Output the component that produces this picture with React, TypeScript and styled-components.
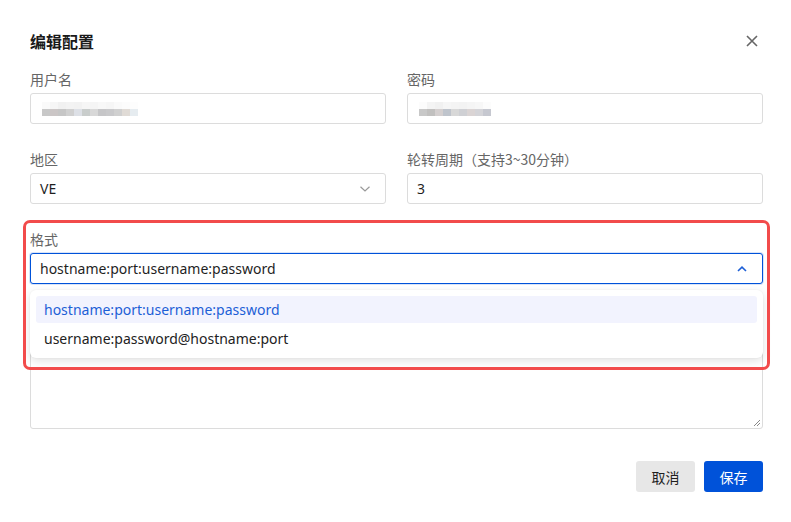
import React from "react";
import styled, {createGlobalStyle} from "styled-components";

const GlobalStyle = createGlobalStyle`
    html, body {
        margin: 0;
        padding: 0;
        background: #ffffff;
    }
    body {
        font-family: "Noto Sans", "Noto Sans CJK SC", sans-serif;
        color: #1f1f1f;
    }
`;

const Dialog = styled.div`
    width: 791px;
    height: 522px;
    box-sizing: border-box;
    padding: 28px 28px 0 30px;
    display: flex;
    flex-direction: column;
`;

const Header = styled.div`
    display: flex;
    align-items: center;
    justify-content: space-between;
    height: 26px;
    margin-bottom: 15px;
`;

const Title = styled.h2`
    margin: 0;
    font-size: 16px;
    font-weight: 700;
    font-family: "Noto Sans CJK SC", sans-serif;
    color: #1a1a1a;
`;

const CloseButton = styled.button`
    border: none;
    background: none;
    padding: 0;
    margin-right: 3px;
    width: 16px;
    height: 16px;
    display: flex;
    align-items: center;
    justify-content: center;
    cursor: pointer;
`;

const Grid = styled.div`
    display: grid;
    grid-template-columns: 1fr 1fr;
    column-gap: 21px;
    row-gap: 25px;
    width: 733px;
`;

const Field = styled.div<{ $wide?: boolean }>`
    position: relative;
    display: flex;
    flex-direction: column;
    gap: 4px;
    grid-column: ${p => (p.$wide ? "1 / span 2" : "auto")};
`;

const Label = styled.label`
    font-size: 14px;
    line-height: 20px;
    color: #666666;
    font-family: "Noto Sans CJK SC", sans-serif;
`;

const Box = styled.div<{ $focused?: boolean }>`
    height: 31px;
    box-sizing: border-box;
    border: 1px solid ${p => (p.$focused ? "#0052d9" : "#dcdcdc")};
    box-shadow: ${p => (p.$focused ? "0 0 0 1px #d9e4f8" : "none")};
    border-radius: 3px;
    display: flex;
    align-items: center;
    justify-content: space-between;
    padding: 0 14px 0 9px;
    font-size: 14px;
    color: #1f1f1f;
    background: #fff;
`;

const TextArea = styled.div`
    grid-column: 1 / span 2;
    margin-top: 24px;
    height: 96px;
    box-sizing: border-box;
    border: 1px solid #dcdcdc;
    border-radius: 3px;
    position: relative;
`;

const Grip = styled.svg`
    position: absolute;
    right: 1px;
    bottom: 1px;
`;

const Mosaic = styled.div`
    display: grid;
    grid-template-columns: repeat(12, 8px);
    grid-template-rows: 7px 7px;
    margin-left: 2px;
    margin-top: 1px;
`;

const Cell = styled.span<{ $c: string }>`
    background: ${p => p.$c};
`;

const Dropdown = styled.div`
    position: absolute;
    top: 61px;
    left: 0;
    right: 0;
    background: #fff;
    border-radius: 6px;
    box-shadow: 0 3px 10px rgba(0, 0, 0, 0.12), 0 0 2px rgba(0, 0, 0, 0.06);
    padding: 6px;
    display: flex;
    flex-direction: column;
    gap: 2px;
    z-index: 2;
`;

const Option = styled.div<{ $active?: boolean }>`
    height: 27px;
    border-radius: 3px;
    display: flex;
    align-items: center;
    padding: 0 8px;
    font-size: 14px;
    color: ${p => (p.$active ? "#1d5fd6" : "#222")};
    background: ${p => (p.$active ? "#f2f3fe" : "transparent")};
`;

const Highlight = styled.div`
    position: absolute;
    top: -9px;
    left: -7px;
    right: -7px;
    height: 150px;
    border: 3px solid #f24b4b;
    border-radius: 7px;
    box-sizing: border-box;
    pointer-events: none;
    z-index: 3;
`;

const Footer = styled.div`
    display: flex;
    justify-content: flex-end;
    gap: 9px;
    margin-top: 32px;
    width: 733px;
`;

const Button = styled.button<{ $primary?: boolean }>`
    width: 59px;
    height: 31px;
    border: none;
    border-radius: 3px;
    font-size: 14px;
    font-family: "Noto Sans CJK SC", sans-serif;
    color: ${p => (p.$primary ? "#fff" : "#1f1f1f")};
    background: ${p => (p.$primary ? "#0052d9" : "#e7e7e7")};
    cursor: pointer;
`;

const userCells = [
    "#fafafa", "#f6f6f6", "#f1f1f1", "#f3f3f3", "#f2f2f2", "#f6f6f6", "#f5f5f5", "#f8f8f8", "#f6f6f6", "#fafafa", "#fcfcfc", "#fdfdfd",
    "#c8c8c8", "#cbc6c6", "#c6c6c6", "#d0d0d0", "#dde0e6", "#c9cdcc", "#d8d8d8", "#c6c6c8", "#c9c9cb", "#d0d0d0", "#e0dbd6", "#e6ecf0",
];

const passCells = [
    "#fcfcfc", "#f4f4f4", "#f1f1f1", "#f6f6f6", "#f4f4f4", "#f3f3f3", "#f5f5f5", "#f7f7f7", "#fcfcfc", "#ffffff", "#ffffff", "#ffffff",
    "#c8c8c8", "#c1c0bf", "#d4cfcf", "#bfc4cc", "#d8d8d8", "#cfd0d4", "#dad4d4", "#d4d4d8", "#c6c8d0", "#ffffff", "#ffffff", "#ffffff",
];

const ChevronDown = () => (
    <svg width="12" height="8" viewBox="0 0 12 8">
        <path d="M1.5 1.8 L6 6 L10.5 1.8" fill="none" stroke="#999" strokeWidth="1.2"/>
    </svg>
);

const ChevronUp = () => (
    <svg width="12" height="8" viewBox="0 0 12 8">
        <path d="M2 6 L6 2.2 L10 6" fill="none" stroke="#1d5fd6" strokeWidth="1.6"/>
    </svg>
);

const App = () => {
    return (
        <>
            <GlobalStyle/>
            <Dialog>
                <Header>
                    <Title>编辑配置</Title>
                    <CloseButton aria-label="关闭">
                        <svg width="12" height="12" viewBox="0 0 12 12">
                            <path d="M1 1 L11 11 M11 1 L1 11" stroke="#666" strokeWidth="1.6"/>
                        </svg>
                    </CloseButton>
                </Header>
                <Grid>
                    <Field>
                        <Label>用户名</Label>
                        <Box>
                            <Mosaic>{userCells.map((c, i) => <Cell key={i} $c={c}/>)}</Mosaic>
                        </Box>
                    </Field>
                    <Field>
                        <Label>密码</Label>
                        <Box>
                            <Mosaic>{passCells.map((c, i) => <Cell key={i} $c={c}/>)}</Mosaic>
                        </Box>
                    </Field>
                    <Field>
                        <Label>地区</Label>
                        <Box>
                            <span>VE</span>
                            <ChevronDown/>
                        </Box>
                    </Field>
                    <Field>
                        <Label>轮转周期（支持3~30分钟）</Label>
                        <Box>
                            <span>3</span>
                        </Box>
                    </Field>
                    <Field $wide>
                        <Highlight/>
                        <Label>格式</Label>
                        <Box $focused>
                            <span>hostname:port:username:password</span>
                            <ChevronUp/>
                        </Box>
                        <Dropdown>
                            <Option $active>hostname:port:username:password</Option>
                            <Option>username:password@hostname:port</Option>
                        </Dropdown>
                    </Field>
                    <TextArea>
                        <Grip width="9" height="9" viewBox="0 0 9 9">
                            <path d="M8 2 L2 8 M8 5 L5 8" stroke="#888" strokeWidth="1"/>
                        </Grip>
                    </TextArea>
                </Grid>
                <Footer>
                    <Button>取消</Button>
                    <Button $primary>保存</Button>
                </Footer>
            </Dialog>
        </>
    );
};

export default App;
